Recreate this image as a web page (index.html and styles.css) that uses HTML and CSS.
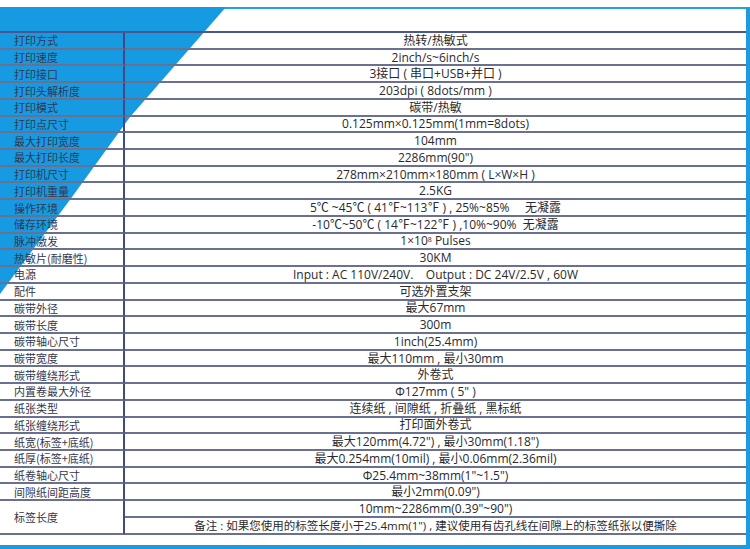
FILE: index.html
```html
<!DOCTYPE html>
<html lang="zh-CN">
<head>
<meta charset="utf-8">
<title>打印机参数</title>
<link rel="stylesheet" href="styles.css">
</head>
<body>
<div class="page">
  <div class="frame">
    <div class="head"></div>
    <div class="spec">
      <div class="k">打印方式</div><div class="v">热转/热敏式</div>
      <div class="k">打印速度</div><div class="v">2inch/s~6inch/s</div>
      <div class="k">打印接口</div><div class="v">3接口 ( 串口+USB+并口 )</div>
      <div class="k">打印头解析度</div><div class="v">203dpi ( 8dots/mm )</div>
      <div class="k">打印模式</div><div class="v">碳带/热敏</div>
      <div class="k">打印点尺寸</div><div class="v">0.125mm×0.125mm(1mm=8dots)</div>
      <div class="k">最大打印宽度</div><div class="v">104mm</div>
      <div class="k">最大打印长度</div><div class="v">2286mm(90")</div>
      <div class="k">打印机尺寸</div><div class="v">278mm×210mm×180mm ( L×W×H )</div>
      <div class="k">打印机重量</div><div class="v">2.5KG</div>
      <div class="k">操作环境</div><div class="v">5℃ ~45℃ ( 41℉~113℉ ) , 25%~85%&nbsp;&nbsp;&nbsp;&nbsp; 无凝露</div>
      <div class="k">储存环境</div><div class="v">-10℃~50℃ ( 14℉~122℉ ) ,10%~90%&nbsp;&nbsp;无凝露</div>
      <div class="k">脉冲激发</div><div class="v">1×10<sup>8</sup>&nbsp;Pulses</div>
      <div class="k">热敏片(耐磨性)</div><div class="v">30KM</div>
      <div class="k">电源</div><div class="v">Input : AC 110V/240V.&nbsp;&nbsp;&nbsp; Output : DC 24V/2.5V , 60W</div>
      <div class="k">配件</div><div class="v">可选外置支架</div>
      <div class="k">碳带外径</div><div class="v">最大67mm</div>
      <div class="k">碳带长度</div><div class="v">300m</div>
      <div class="k">碳带轴心尺寸</div><div class="v">1inch(25.4mm)</div>
      <div class="k">碳带宽度</div><div class="v">最大110mm , 最小30mm</div>
      <div class="k">碳带缠绕形式</div><div class="v">外卷式</div>
      <div class="k">内置卷最大外径</div><div class="v">Φ127mm ( 5" )</div>
      <div class="k">纸张类型</div><div class="v">连续纸 , 间隙纸 , 折叠纸 , 黑标纸</div>
      <div class="k">纸张缠绕形式</div><div class="v">打印面外卷式</div>
      <div class="k">纸宽(标签+底纸)</div><div class="v">最大120mm(4.72") , 最小30mm(1.18")</div>
      <div class="k">纸厚(标签+底纸)</div><div class="v">最大0.254mm(10mil) , 最小0.06mm(2.36mil)</div>
      <div class="k">纸卷轴心尺寸</div><div class="v">Φ25.4mm~38mm(1"~1.5")</div>
      <div class="k">间隙纸间距高度</div><div class="v">最小2mm(0.09")</div>
      <div class="k span2">标签长度</div><div class="v">10mm~2286mm(0.39"~90")</div>
      <div class="v note">备注 : 如果您使用的标签长度小于25.4mm(1") , 建议使用有齿孔线在间隙上的标签纸张以便撕除</div>
    </div>
  </div>
</div>
</body>
</html>
```

FILE: styles.css
```css
html, body {
  margin: 0;
  padding: 0;
  background: #ffffff;
}

.page {
  width: 750px;
  height: 549px;
  padding-top: 7px;
  box-sizing: border-box;
  background: #ffffff;
}

.frame {
  position: relative;
  height: 542px;
  box-sizing: border-box;
  border-top: 2px solid #27a2e0;
  border-right: 4px solid #1b9ce0;
  border-bottom: 4px solid #1b9ce0;
  display: flex;
  flex-direction: column;
}

.frame::before {
  content: "";
  position: absolute;
  left: 0;
  top: -2px;
  width: 240px;
  height: 300px;
  background: #169be2;
  clip-path: polygon(0 0, 226px 0, 130px 110px, 72px 190px, 0 287px);
  z-index: 0;
}

.head {
  height: 22px;
  flex: none;
}

.spec {
  position: relative;
  z-index: 1;
  display: grid;
  grid-template-columns: 125px 1fr;
  grid-auto-rows: 16.72px;
  border-top: 2px solid #4c5690;
  font-size: 12px;
  color: #2a2a2e;
}

.k, .v {
  box-sizing: border-box;
  border-bottom: 2px solid #6a7090;
  display: flex;
  align-items: center;
  white-space: nowrap;
  line-height: 1;
}

.k {
  border-right: 2px solid #3f4a86;
  padding-left: 14px;
  padding-top: 1px;
  font-family: "Noto Sans CJK SC", sans-serif;
  font-size: 11px;
  color: #33374e;
}

.v {
  justify-content: center;
  padding-top: 1px;
  font-family: "Open Sans", "Noto Sans CJK SC", sans-serif;
  font-size: 12px;
}

.span2 {
  grid-row: span 2;
}

.note {
  font-size: 11.5px;
}

sup {
  font-size: 7px;
  line-height: 0;
  position: relative;
  top: -1px;
  vertical-align: super;
}
```
